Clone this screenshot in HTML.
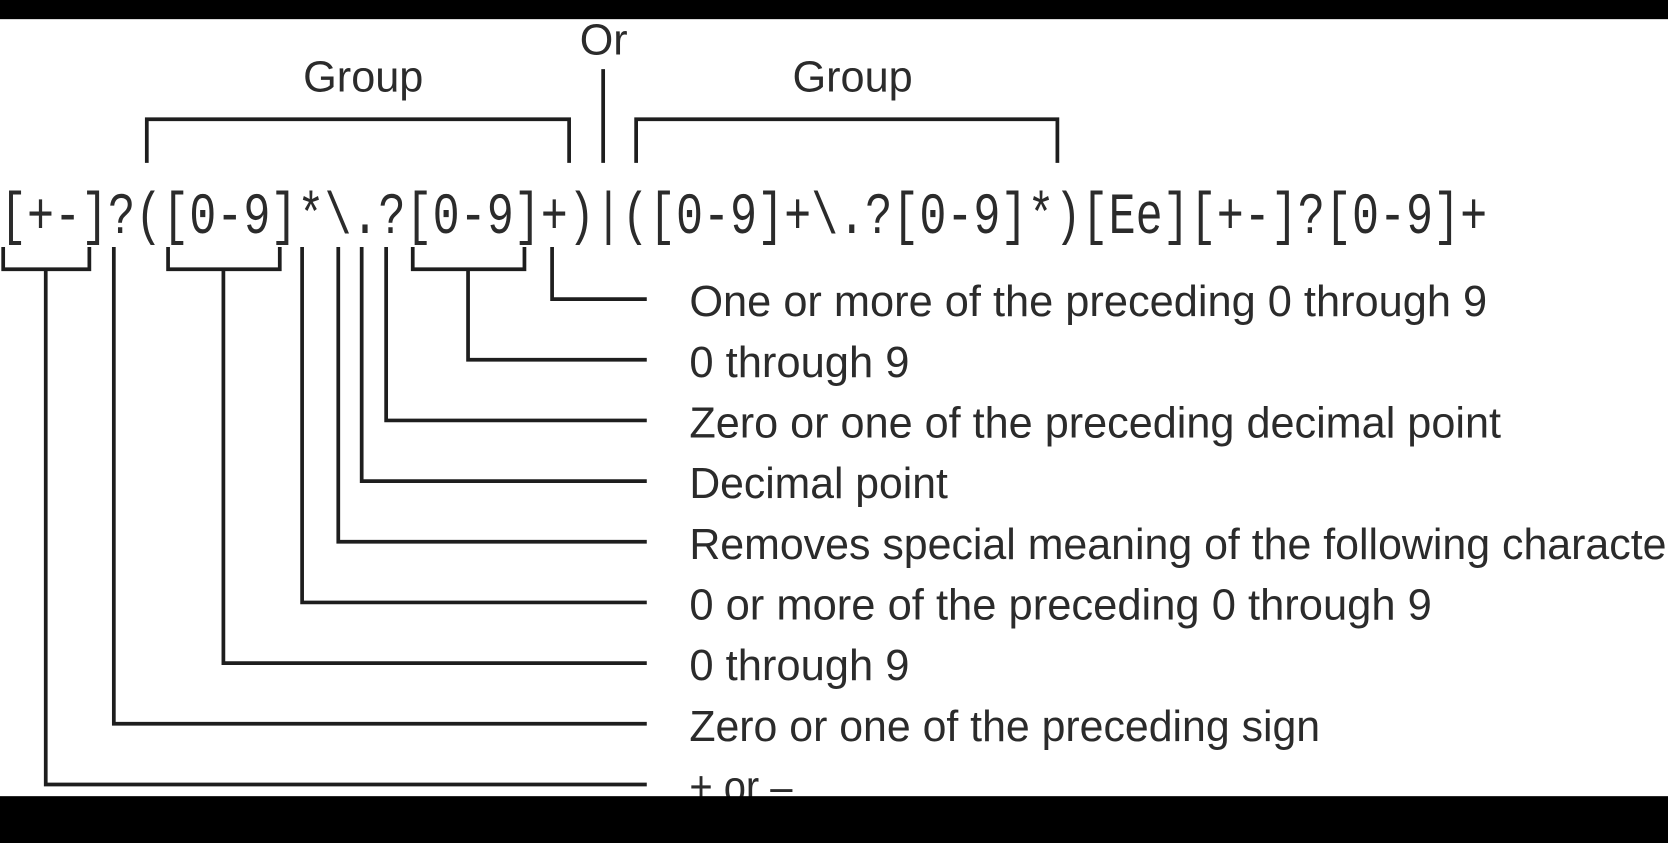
<!DOCTYPE html>
<html><head><meta charset="utf-8"><style>
html,body{margin:0;padding:0;background:#fff;overflow:hidden}
svg{display:block}
.m{font-family:"Liberation Mono",monospace;font-size:55px;fill:#2b2b2b}
.s{font-family:"Liberation Sans",sans-serif;font-size:41px;fill:#2b2b2b}
.l{stroke:#1e1e1e;stroke-width:3.5;fill:none}
</style></head><body>
<svg width="1668" height="843" viewBox="0 0 1568 792" preserveAspectRatio="none" xmlns="http://www.w3.org/2000/svg">
<rect x="0" y="0" width="1568" height="792" fill="#fff"/>
<text class="s" x="285" y="86" textLength="113" lengthAdjust="spacingAndGlyphs">Group</text>
<text class="s" x="545" y="51" textLength="45" lengthAdjust="spacingAndGlyphs">Or</text>
<text class="s" x="745" y="86" textLength="113" lengthAdjust="spacingAndGlyphs">Group</text>
<path class="l" d="M138 153V112H535V153M598 153V112H994V153M567 65V153"/>
<text class="m" x="0" y="219" textLength="1398" lengthAdjust="spacingAndGlyphs">[+-]?([0-9]*\.?[0-9]+)|([0-9]+\.?[0-9]*)[Ee][+-]?[0-9]+</text>
<path class="l" d="M3 232V253H84V232M43 253V737H608
M107 232V680H608
M158 232V253H263V232M210 253V623H608
M284 232V566H608
M318 232V509H608
M340 232V452H608
M363 232V395H608
M388 232V253H493V232M440 253V338H608
M519 232V281H608"/>
<g class="s">
<text x="648" y="297" textLength="750" lengthAdjust="spacingAndGlyphs">One or more of the preceding 0 through 9</text>
<text x="648" y="354" textLength="207" lengthAdjust="spacingAndGlyphs">0 through 9</text>
<text x="648" y="411" textLength="763" lengthAdjust="spacingAndGlyphs">Zero or one of the preceding decimal point</text>
<text x="648" y="468" textLength="243" lengthAdjust="spacingAndGlyphs">Decimal point</text>
<text x="648" y="525" textLength="932" lengthAdjust="spacingAndGlyphs">Removes special meaning of the following character</text>
<text x="648" y="582" textLength="698" lengthAdjust="spacingAndGlyphs">0 or more of the preceding 0 through 9</text>
<text x="648" y="639" textLength="207" lengthAdjust="spacingAndGlyphs">0 through 9</text>
<text x="648" y="696" textLength="593" lengthAdjust="spacingAndGlyphs">Zero or one of the preceding sign</text>
<text x="648" y="753" textLength="97" lengthAdjust="spacingAndGlyphs">+ or –</text>
</g>
<rect x="0" y="0" width="1568" height="18" fill="#000"/>
<rect x="0" y="748" width="1568" height="44" fill="#000"/>
</svg>
</body></html>
